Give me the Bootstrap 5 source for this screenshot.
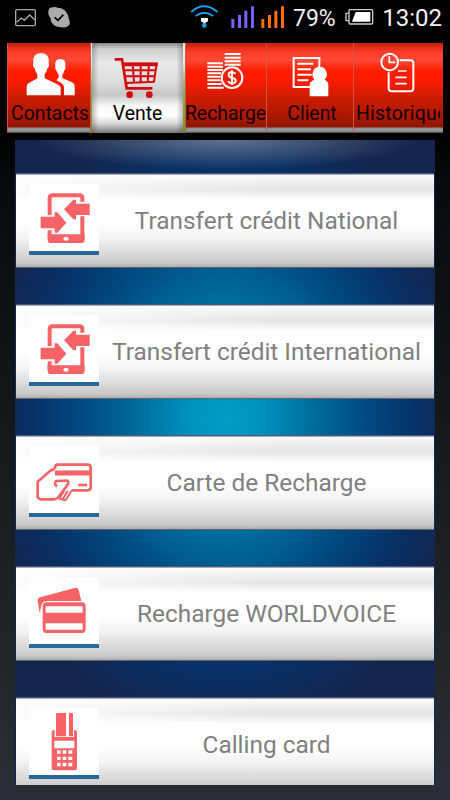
<!DOCTYPE html>
<html lang="fr">
<head>
<meta charset="utf-8">
<meta name="viewport" content="width=device-width, initial-scale=1">
<title>Vente</title>
<link rel="stylesheet" href="https://cdn.jsdelivr.net/npm/bootstrap@5.3.0/dist/css/bootstrap.min.css">
<style>
body{width:450px;height:800px;font-family:Roboto,"Liberation Sans",sans-serif;background:linear-gradient(#000 0,#000 120px,#08090a 180px,#14181a 420px,#23272a 680px,#2a2d35 780px)}
svg{display:block}
.status{height:43px;color:#f2f2f2;font-size:24px;line-height:37px}
.tabs{height:90px;padding:0 7px}
.tab-item{height:90px;border-bottom:1px solid #555;color:#160000;font-size:19.4px;line-height:24px;background:linear-gradient(#c81d0d 0,#ff3c28 9px,#ff4934 17px,#ff1e00 28px,#fa1b00 38px,#cc1c00 55px,#a61800 75px,#8f1500 84px,#8e8e8e 85px,#9a9a9a 88px,#6f6f6f 89px);box-shadow:inset 1px 0 #d4503f}
.tab-item span{white-space:nowrap;height:24px;margin-top:1px}
.tab-item.active{color:#000;border:0;background:linear-gradient(#eee 20%,#8fae60 50%,#5fa312) 0 0/2px 100% no-repeat,linear-gradient(#eee 20%,#8fae60 50%,#5fa312) 100% 0/2px 100% no-repeat,linear-gradient(90deg,rgba(70,70,70,.45),transparent 9%,transparent 91%,rgba(70,70,70,.45)),linear-gradient(#888 0,#cfcfcf 6px,#e9e9e9 20px,#dedede 38px,#c8c8c8 52px,#f8f8f8 63px,#fff 72px,#ddd 80px,#777 90px)}
.w1{width:83px}.w2{width:95px}.w3{width:81px}.w4{width:87px}.w5{width:90px}
.w1 span{padding-left:3px}
.w4 span{padding-left:5px}
.panel{width:420px;height:645px;margin:7px 0 0 15px;padding:34px 1px 0;gap:37px;background:radial-gradient(ellipse 190px 30px at 50% 0,rgba(150,160,180,.6),rgba(150,160,180,0)),radial-gradient(ellipse 245px 320px at 50% 43%,#009cc4 0,#0092bd 15%,#006d9c 36%,#004a80 58%,#082f64 80%,#14264f 98%)}
.item{height:94px;flex:none;padding:9px 0 0 13px;border-bottom:1px solid #5c6470;border-top:1px solid #a5abb5;box-shadow:0 -1px #4c5b7c;color:#808080;font-size:24.4px;background:linear-gradient(90deg,rgba(255,255,255,.85),rgba(255,255,255,0) 65%) 0 0/100% 26px no-repeat,linear-gradient(#fafafa 0,#ededed 8px,#e4e4e4 15px,#fff 25px,#fff 48px,#f3f3f3 63px,#d7d7d7 80px,#c9c9c9 88px,#a6a6a6 93px)}
.thumb{width:70px;height:71px;padding-top:1px;background:#fff;border-bottom:4px solid #28689a;flex:none;color:#f56367}
.label{height:74px;white-space:nowrap}
</style>
<script src="https://cdn.jsdelivr.net/npm/bootstrap@5.3.0/dist/js/bootstrap.bundle.min.js"></script>
</head>
<body class="overflow-hidden">
<header class="status d-flex">
  <svg width="190" height="43" viewBox="0 0 570 129" fill="none" stroke="#aaa" stroke-width="4">
    <rect x="47" y="29" width="59" height="48" rx="4"/><path d="M50 67l14-13 9 7 16-16 15 14"/>
    <path d="M151 25q13-4 22 0c21 1 31 18 32 33 8 16-5 25-18 22-19 1-33-8-33-25-8-11-9-23-3-30z" fill="#aaa"/><path d="M164 52l10 9 16-17" stroke="#000" stroke-width="5"/>
  </svg>
  <svg width="100" height="43" viewBox="570 0 300 129" fill="none">
    <g stroke="#18a0ee" stroke-width="6"><path d="M574 36q38-34 78 0"/><path d="M587 48q26-20 53 0"/></g>
    <path d="M603 54h21v10l-8 4v14h-6V68l-7-4z" fill="#fff"/><circle cx="613" cy="76" r="7" fill="#18a0ee"/>
    <path fill="#7960ff" d="M694 57h9v27h-9zM714 45h9v39h-9zM733 32h9v52h-9zM753 19h9v65h-9z"/>
    <path fill="#ff700d" d="M784 57h9v27h-9zM804 45h9v39h-9zM823 32h9v52h-9zM843 19h9v65h-9z"/>
  </svg>
  <span style="margin-left:3px;width:51px;font-size:23px">79%</span>
  <svg width="30" height="43" viewBox="1032 0 90 129" fill="none"><rect x="1047" y="29" width="71" height="43" rx="3" stroke="#ccc" stroke-width="4"/><path d="M1046 40h-8v22h8" stroke="#ccc" stroke-width="4"/><path d="M1067 36h44v29h-55z" fill="#fff"/></svg>
  <span class="ms-auto" style="margin-right:8px">13:02</span>
</header>
<nav class="tabs d-flex">
  <div class="tab-item w1 d-flex flex-column align-items-center">
    <svg width="83" height="58" viewBox="21 129 249 174" fill="#fff"><path d="M80 286v-27q0-7 8-11l24-13v-12q-7-8-8-18-7-5-4-15-4-30 23-31 27 1 23 31 3 11-4 15-1 10-8 18v12l37 17q11 5 11 13v21z"/><path d="M192 286v-24q-1-9-9-14l-14-7 3-4 4-4v-9q-6-6-7-13-5-4-3-12-3-22 15-22t15 22q2 8-3 12-1 8-6 13v10l29 13q8 4 8 11v28z"/></svg>
    <span>Contacts</span>
  </div>
  <div class="tab-item active w2 d-flex flex-column align-items-center">
    <svg width="95" height="58" viewBox="270 129 285 174" fill="none" stroke="#d2080e" stroke-width="8"><path d="M344 178h22l14 87h77"/><path d="M370 191h100l-8 54-84 4M373 211h92M376 229h88M398 191l4 56M422 191v56M447 191l-4 56" stroke-width="6"/><path d="M369 193h104" stroke-width="11"/><g fill="#d2080e" stroke="none"><circle cx="389" cy="284" r="10"/><circle cx="448" cy="284" r="10"/></g></svg>
    <span>Vente</span>
  </div>
  <div class="tab-item w3 d-flex flex-column align-items-center">
    <svg width="81" height="58" viewBox="0 0 243 174" fill="none" stroke="#fff"><path stroke-width="6" d="M67 61h47M67 71h47M67 81h47M67 91h43M67 101h41M67 112h41M67 123h43M67 134h49M119 33h48M119 44h48M119 55h48M119 65h48"/><circle cx="141" cy="104" r="35" fill="#f81d00" stroke="none"/><circle cx="141" cy="104" r="31" stroke-width="6"/><path stroke-width="6" d="M151 93q-3-6-10-6-10 0-10 8 0 7 10 9 11 2 11 9t-11 8q-9 0-11-7M141 82v44"/></svg>
    <span>Recharge</span>
  </div>
  <div class="tab-item w4 d-flex flex-column align-items-center">
    <svg width="87" height="58" viewBox="798 129 261 174" fill="none" stroke="#fff"><path stroke-width="6" d="M938 261h-57v-87h77v28M892 191h48M892 208h41M892 224h43M892 241h33"/><path fill="#fff" stroke="none" d="M929 289v-35q0-9 14-15-6-5-6-16 2-22 22-23 20 1 22 23 0 11-7 16 11 5 11 15v35z"/></svg>
    <span>Client</span>
  </div>
  <div class="tab-item w5 d-flex flex-column align-items-start">
    <svg width="90" height="58" viewBox="1059 129 270 174" fill="none" stroke="#fff" stroke-width="6"><path d="M1199 181h32q9 0 9 9v75q0 9-9 9h-56q-9 0-9-9v-48"/><circle cx="1169" cy="186" r="25"/><path d="M1168 168v19h18M1194 213h26M1186 232h34M1186 251h34" stroke-width="5"/></svg>
    <span class="overflow-hidden" style="margin-left:3px;width:84px;letter-spacing:.25px">Historique</span>
  </div>
</nav>
<main class="panel d-flex flex-column overflow-hidden">
  <div class="item d-flex">
    <div class="thumb"><svg width="70" height="65" viewBox="87 149 210 195" fill="none" stroke="currentColor"><path stroke-width="12" d="M149 239v-50q0-9 9-9h80q9 0 9 9v10M247 243v68M149 285v26"/><path fill="currentColor" stroke="none" d="M143 297h111v16q0 10-10 10h-91q-10 0-10-10zM122 244h42v-13h8l27 31-27 30h-8v-13h-42zM269 205h-41v-12h-8l-28 29 28 30h8v-13h41z"/><ellipse cx="198" cy="310" rx="8" ry="6" fill="#fff" stroke="none"/></svg></div>
    <div class="label flex-fill d-flex align-items-center justify-content-center"><span>Transfert crédit National</span></div>
  </div>
  <div class="item d-flex">
    <div class="thumb"><svg width="70" height="65" viewBox="87 149 210 195" fill="none" stroke="currentColor"><path stroke-width="12" d="M149 239v-50q0-9 9-9h80q9 0 9 9v10M247 243v68M149 285v26"/><path fill="currentColor" stroke="none" d="M143 297h111v16q0 10-10 10h-91q-10 0-10-10zM122 244h42v-13h8l27 31-27 30h-8v-13h-42zM269 205h-41v-12h-8l-28 29 28 30h8v-13h41z"/><ellipse cx="198" cy="310" rx="8" ry="6" fill="#fff" stroke="none"/></svg></div>
    <div class="label flex-fill d-flex align-items-center justify-content-center"><span>Transfert crédit International</span></div>
  </div>
  <div class="item d-flex">
    <div class="thumb"><svg width="70" height="65" viewBox="27 22 210 195" fill="none" stroke="currentColor" stroke-width="8" stroke-linejoin="round"><path d="M105 88V84q0-9 9-9h89q9 0 9 9v59q0 9-9 9h-49"/><path d="M105 100h106" stroke-width="15"/><path d="M175 136h26"/><path d="M104 89q-8-1-15 6l-36 31v47l7 6h42q12-1 18-13l25-34q2-10-10-9l-27 1q-7 10 3 16"/><path d="M133 153l-15 23q3 7 11 1l14-23M154 153l-14 24q-4 7-12 3" stroke-width="6"/></svg></div>
    <div class="label flex-fill d-flex align-items-center justify-content-center"><span>Carte de Recharge</span></div>
  </div>
  <div class="item d-flex">
    <div class="thumb"><svg width="70" height="65" viewBox="27 24 210 195" fill="currentColor"><path d="M59 129L53 92q-1-7 8-10L164 54q9-2 12 6l8 33H82q-16 0-18 14z"/><path fill-rule="evenodd" d="M79 97h107q11 0 11 11v70q0 11-11 11H79q-11 0-11-11v-70q0-11 11-11zM77 109v19h111v-19zM77 160v19h111v-19z"/></svg></div>
    <div class="label flex-fill d-flex align-items-center justify-content-center"><span>Recharge WORLDVOICE</span></div>
  </div>
  <div class="item d-flex">
    <div class="thumb"><svg width="70" height="65" viewBox="87 57 210 195" fill="currentColor"><path d="M168 73q0-4 4-4h26v70h-30zM207 69h8q4 0 4 4v66h-12z"/><path fill-rule="evenodd" d="M155 126q0-6 9-6v21h58v-21q9 0 9 6v107q0 8-8 8h-60q-8 0-8-8zM163 152v23h60v-23zM171 181v10h11v-10zM188 181v10h11v-10zM205 181v10h12v-10zM171 200v10h11v-10zM188 200v10h11v-10zM205 200v10h12v-10zM171 218v11h11v-11zM188 218v11h11v-11zM205 218v11h12v-11z"/></svg></div>
    <div class="label flex-fill d-flex align-items-center justify-content-center"><span>Calling card</span></div>
  </div>
</main>
</body>
</html>
